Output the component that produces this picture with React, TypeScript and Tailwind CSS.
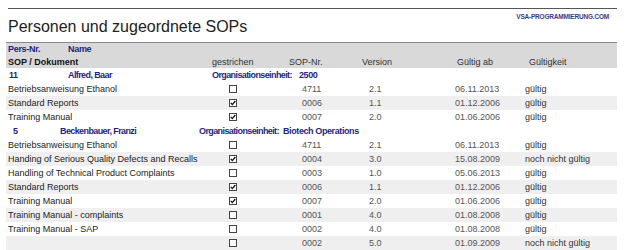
import React from "react";

type Doc = { title: string; struck: boolean; nr: string; version: string; from: string; valid: string };
type Person = { nr: string; name: string; org: string; docs: Doc[]; nrX: string; nameX: string; orgX: string };

const people: Person[] = [
  {
    nr: "11", name: "Alfred, Baar", org: "2500",
    nrX: "w-[62px] pl-[3px]", nameX: "w-[144px]", orgX: "w-[87px]",
    docs: [
      { title: "Betriebsanweisung Ethanol", struck: false, nr: "4711", version: "2.1", from: "06.11.2013", valid: "gültig" },
      { title: "Standard Reports", struck: true, nr: "0006", version: "1.1", from: "01.12.2006", valid: "gültig" },
      { title: "Training Manual", struck: true, nr: "0007", version: "2.0", from: "01.06.2006", valid: "gültig" },
    ],
  },
  {
    nr: "5", name: "Beckenbauer, Franzi", org: "Biotech Operations",
    nrX: "w-[54px] pl-[7px]", nameX: "w-[139px]", orgX: "w-[84px]",
    docs: [
      { title: "Betriebsanweisung Ethanol", struck: false, nr: "4711", version: "2.1", from: "06.11.2013", valid: "gültig" },
      { title: "Handing of Serious Quality Defects and Recalls", struck: true, nr: "0004", version: "3.0", from: "15.08.2009", valid: "noch nicht gültig" },
      { title: "Handling of Technical Product Complaints", struck: false, nr: "0003", version: "1.0", from: "05.06.2013", valid: "gültig" },
      { title: "Standard Reports", struck: true, nr: "0006", version: "1.1", from: "01.12.2006", valid: "gültig" },
      { title: "Training Manual", struck: true, nr: "0007", version: "2.0", from: "01.06.2006", valid: "gültig" },
      { title: "Training Manual - complaints", struck: false, nr: "0001", version: "4.0", from: "01.08.2008", valid: "gültig" },
      { title: "Training Manual - SAP", struck: false, nr: "0002", version: "4.0", from: "01.08.2008", valid: "gültig" },
      { title: "", struck: false, nr: "0002", version: "5.0", from: "01.09.2009", valid: "noch nicht gültig" },
    ],
  },
];

const Box = ({ checked }: { checked: boolean }) => (
  <svg width="8" height="8" viewBox="0 0 8 8" className="block">
    <rect x="0.5" y="0.5" width="7" height="7" fill="#fff" stroke="#444" strokeWidth="1" />
    {checked && <path d="M1.8 3.8 L3.3 5.6 L6.3 2" fill="none" stroke="#111" strokeWidth="1.3" />}
  </svg>
);

export default function App() {
  return (
    <div className="w-[644px] h-[250px] overflow-hidden bg-white font-['Liberation_Sans',Arial,sans-serif] text-[#333]">
      <div className="ml-[8px] w-[609px] mt-[8px] border-t border-[#555]" />
      <div className="flex items-start justify-between ml-[8px] w-[601px] h-[33px]">
        <h1 className="text-[16px] leading-[18px] mt-[9px] text-[#222]">Personen und zugeordnete SOPs</h1>
        <span className="text-[6.5px] leading-[8px] mt-[4px] tracking-[-0.2px] text-[#3b3b8a] font-bold">VSA-PROGRAMMIERUNG.COM</span>
      </div>

      <div className="ml-[6px] w-[611px] border-t border-[#8a8a8a] bg-[#d9d9d9] h-[26px] text-[9px] leading-[13px]">
        <div className="flex pl-[2px] font-bold tracking-[-0.3px] text-[#1f1f86]">
          <span className="w-[60px]">Pers-Nr.</span>
          <span>Name</span>
        </div>
        <div className="flex pl-[2px]">
          <span className="w-[204px] font-bold text-[#111]">SOP / Dokument</span>
          <span className="w-[77px]">gestrichen</span>
          <span className="w-[73px]">SOP-Nr.</span>
          <span className="w-[95px]">Version</span>
          <span className="w-[72px]">Gültig ab</span>
          <span>Gültigkeit</span>
        </div>
      </div>

      <div className="ml-[6px] w-[611px] text-[9px] leading-[14px]">
        {people.map((p) => (
          <div key={p.nr}>
            <div className="flex h-[14px] font-bold tracking-[-0.6px] text-[#1f1f86]">
              <span className={p.nrX}>{p.nr}</span>
              <span className={p.nameX}>{p.name}</span>
              <span className={p.orgX}>Organisationseinheit:</span>
              <span className="tracking-[-0.4px]">{p.org}</span>
            </div>
            {p.docs.map((d, i) => (
              <div key={i} className={`flex h-[14px] items-center ${i % 2 === 1 ? "bg-[#efefef]" : ""}`}>
                <span className="w-[223px] pl-[2px] text-[#222]">{d.title}</span>
                <span className="w-[73px]"><Box checked={d.struck} /></span>
                <span className="w-[67px] text-[#555]">{d.nr}</span>
                <span className="w-[86px] text-[#555]">{d.version}</span>
                <span className="w-[70px] text-[#555]">{d.from}</span>
                <span className="text-[#333]">{d.valid}</span>
              </div>
            ))}
          </div>
        ))}
      </div>
    </div>
  );
}
